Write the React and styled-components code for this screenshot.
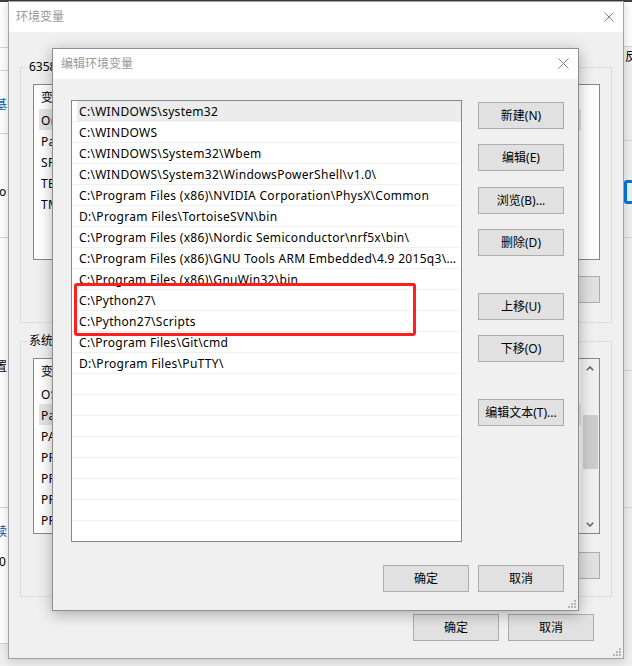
import React from 'react';
import styled, { createGlobalStyle } from 'styled-components';

const FONT = `"Noto Sans", "Noto Sans CJK SC", sans-serif`;

const GlobalStyle = createGlobalStyle`
  html, body { margin: 0; padding: 0; }
  body { background: #f0f0f0; font-family: ${FONT}; font-size: 12px; }
  * { box-sizing: border-box; }
`;

const Desktop = styled.div`
  position: relative;
  width: 632px;
  height: 666px;
  overflow: hidden;
  background: linear-gradient(#3c4043 0 2px, #f0f0f0 2px);
`;

/* ---------- partially visible windows behind ---------- */
const SideWindow = styled.div`
  position: absolute;
  left: ${p => p.$x}px;
  top: 2px;
  width: ${p => p.$w}px;
  height: 642px;
  background: ${p => p.$bg};
  display: flex;
  flex-direction: column;
`;
const SideSeg = styled.div`
  flex: none;
  height: ${p => p.$h}px;
  border-bottom: 1px solid #d6d6d6;
  padding-top: ${p => p.$pt || 0}px;
  padding-left: ${p => p.$pl || 0}px;
  background: ${p => p.$bg || 'transparent'};
`;
const SideText = styled.div`
  font: 12px/16px ${FONT};
  color: ${p => (p.$blue ? '#0063b1' : '#000')};
  margin-top: ${p => p.$mt || 0}px;
  margin-left: ${p => p.$ml || 0}px;
  white-space: nowrap;
`;
const BlueFrame = styled.div`
  width: 40px;
  height: 24px;
  border: 3px solid #0078d7;
  border-radius: 3px;
  margin-left: 4px;
`;

/* ---------- dialogs ---------- */
const Window = styled.div`
  position: absolute;
  left: ${p => p.$x}px;
  top: ${p => p.$y}px;
  width: ${p => p.$w}px;
  height: ${p => p.$h}px;
  border: 1px solid ${p => p.$border};
  background: #f0f0f0;
  display: flex;
  flex-direction: column;
  box-shadow: ${p => p.$shadow};
`;
const TitleBar = styled.div`
  flex: none;
  height: 30px;
  background: #fff;
  display: flex;
  align-items: center;
  justify-content: space-between;
  padding: 0 9px 1px ${p => p.$pl}px;
  font: 12px/16px ${FONT};
  color: #999;
`;
const Grip = styled.svg`
  position: absolute;
  right: 2px;
  bottom: 2px;
`;

const OuterBody = styled.div`
  flex: 1;
  display: flex;
  flex-direction: column;
  padding: 27px 11px 17px 11px;
`;
const Group = styled.fieldset`
  margin: ${p => p.$mt}px 0 0;
  padding: 9px 11px ${p => p.$pb}px 12px;
  border: 1px solid #dcdcdc;
  min-width: 0;
  display: flex;
  flex-direction: column;
`;
const Legend = styled.legend`
  padding: 0 2px;
  margin-left: -6px;
  font: 12px/16px ${FONT};
  color: #000;
`;
const ListBox = styled.div`
  flex: none;
  position: relative;
  height: ${p => p.$h}px;
  width: ${p => (p.$w ? `${p.$w}px` : 'auto')};
  border: 1px solid #828790;
  background: #fff;
  display: flex;
  overflow: hidden;
`;
const ListMain = styled.div`
  flex: 1;
  min-width: 0;
  display: flex;
  flex-direction: column;
`;
const ListHeader = styled.div`
  flex: none;
  height: 24px;
  padding-top: 2px;
  display: flex;
  align-items: center;
  font: 12px/16px ${FONT};
  color: #000;
`;
const HeaderCell = styled.div`
  flex: none;
  width: ${p => p.$w}px;
  padding-left: 7px;
`;
const VarRow = styled.div`
  flex: none;
  height: 21px;
  margin-left: 5px;
  padding: 2px 0 0 2px;
  display: flex;
  align-items: center;
  background: ${p => (p.$sel ? '#e5e5e5' : 'transparent')};
  font: 12px/16px ${FONT};
  letter-spacing: 0.3px;
  color: #000;
  white-space: nowrap;
`;
const VarCell = styled.div`
  flex: none;
  width: ${p => p.$w}px;
  overflow: hidden;
`;
const ScrollGap = styled.div`
  flex: none;
  width: 18px;
`;
const ScrollBar = styled.div`
  flex: none;
  width: 18px;
  background: #f0f0f0;
  display: flex;
  flex-direction: column;
`;
const ScrollArrow = styled.div`
  flex: none;
  height: 17px;
  padding-top: ${p => (p.$up ? 2 : 0)}px;
  display: flex;
  align-items: center;
  justify-content: center;
`;
const ScrollTrack = styled.div`
  flex: 1;
  padding: 0 1px 0 2px;
`;
const ScrollThumb = styled.div`
  margin-top: ${p => p.$top}px;
  height: ${p => p.$h}px;
  background: #cdcdcd;
`;

const ButtonRow = styled.div`
  display: flex;
  justify-content: flex-end;
  gap: 9px;
  margin-top: ${p => p.$mt || 0}px;
  padding-right: ${p => p.$pr || 0}px;
`;
const Button = styled.button`
  flex: none;
  width: 86px;
  height: 27px;
  margin: ${p => p.$mt || 0}px 0 0;
  padding: 0;
  border: 1px solid #adadad;
  background: #e1e1e1;
  font: 12px/16px ${FONT};
  color: #000;
`;

const EditBody = styled.div`
  flex: 1;
  display: flex;
  flex-direction: column;
  padding: 21px 14px 18px 18px;
`;
const EditMain = styled.div`
  display: flex;
  gap: 16px;
`;
const ButtonCol = styled.div`
  flex: none;
  width: 86px;
  display: flex;
  flex-direction: column;
`;
const PathRow = styled.div`
  flex: none;
  height: 21px;
  border-bottom: 1px solid #f0f0f0;
  display: flex;
`;
const PathCell = styled.div`
  flex: 1;
  min-width: 0;
  margin-left: 5px;
  padding: 2px 2px 0;
  background: ${p => (p.$sel ? '#ececec' : 'transparent')};
  font: 12px/18px ${FONT};
  letter-spacing: 0.3px;
  color: #000;
  white-space: nowrap;
  overflow: hidden;
  text-overflow: ellipsis;
`;
const RedBox = styled.div`
  position: absolute;
  left: 2px;
  top: 182px;
  width: 342px;
  height: 53px;
  border: 3px solid #ff1f1f;
  border-radius: 3px;
`;

/* ---------- icons ---------- */
const CloseIcon = ({ size }) => (
  <svg width={size} height={size} viewBox={`0 0 ${size} ${size}`}>
    <path
      d={`M0.5 0.5L${size - 0.5} ${size - 0.5}M${size - 0.5} 0.5L0.5 ${size - 0.5}`}
      stroke="#808080"
      strokeWidth="1"
      fill="none"
    />
  </svg>
);

const ResizeGrip = () => (
  <Grip width="8" height="8" viewBox="0 0 8 8">
    {[[6, 0], [3, 3], [6, 3], [0, 6], [3, 6], [6, 6]].map(([x, y]) => (
      <rect key={`${x}-${y}`} x={x} y={y} width="2" height="2" fill="#b4b4b4" />
    ))}
  </Grip>
);

const Chevron = ({ up }) => (
  <svg width="8" height="5" viewBox="0 0 8 5">
    <path
      d={up ? 'M0.8 4.2L4 1L7.2 4.2' : 'M0.8 0.8L4 4L7.2 0.8'}
      stroke="#606060"
      strokeWidth="1.5"
      fill="none"
    />
  </svg>
);

/* ---------- data ---------- */
const userVars = ['OneDrive', 'Path', 'SF_HOME', 'TEMP', 'TMP'];
const sysVars = [
  'OS',
  'Path',
  'PATHEXT',
  'PROCESSOR_ARCHITECTURE',
  'PROCESSOR_IDENTIFIER',
  'PROCESSOR_LEVEL',
  'PROCESSOR_REVISION',
];
const paths = [
  'C:\\WINDOWS\\system32',
  'C:\\WINDOWS',
  'C:\\WINDOWS\\System32\\Wbem',
  'C:\\WINDOWS\\System32\\WindowsPowerShell\\v1.0\\',
  'C:\\Program Files (x86)\\NVIDIA Corporation\\PhysX\\Common',
  'D:\\Program Files\\TortoiseSVN\\bin',
  'C:\\Program Files (x86)\\Nordic Semiconductor\\nrf5x\\bin\\',
  'C:\\Program Files (x86)\\GNU Tools ARM Embedded\\4.9 2015q3\\bin',
  'C:\\Program Files (x86)\\GnuWin32\\bin',
  'C:\\Python27\\',
  'C:\\Python27\\Scripts',
  'C:\\Program Files\\Git\\cmd',
  'D:\\Program Files\\PuTTY\\',
];
const pathRows = [...paths, ...Array(8).fill('')];

const VarList = ({ names, selected, scroll }) => (
  <ListBox $h={176}>
    <ListMain>
      <ListHeader>
        <HeaderCell $w={160}>变量</HeaderCell>
        <HeaderCell $w={300}>值</HeaderCell>
      </ListHeader>
      {names.map((n, i) => (
        <VarRow key={n} $sel={i === selected}>
          <VarCell $w={153}>{n}</VarCell>
        </VarRow>
      ))}
    </ListMain>
    {scroll ? (
      <ScrollBar>
        <ScrollArrow $up><Chevron up /></ScrollArrow>
        <ScrollTrack><ScrollThumb $top={39} $h={54} /></ScrollTrack>
        <ScrollArrow><Chevron /></ScrollArrow>
      </ScrollBar>
    ) : (
      <ScrollGap />
    )}
  </ListBox>
);

export default function App() {
  return (
    <>
      <GlobalStyle />
      <Desktop>
        {/* window behind, left */}
        <SideWindow $x={-100} $w={300} $bg="#fff">
          <SideSeg $h={46} />
          <SideSeg $h={23} />
          <SideSeg $h={63} $pt={26} $pl={95}><SideText $blue>基本</SideText></SideSeg>
          <SideSeg $h={104} $pt={50} $pl={95}><SideText $ml={4}>o</SideText></SideSeg>
          <SideSeg $h={270} $pt={121} $pl={95}><SideText>置</SideText></SideSeg>
          <SideSeg $h={136} $pt={16} $pl={95}>
            <SideText $blue>续</SideText>
            <SideText $mt={14} $ml={4}>0</SideText>
          </SideSeg>
        </SideWindow>

        {/* window behind, right */}
        <SideWindow $x={620} $w={100} $bg="#f0f0f0">
          <SideSeg $h={45} $bg="#fff" />
          <SideSeg $h={94} $pt={2} $pl={5}><SideText>反馈</SideText></SideSeg>
          <SideSeg $h={97} $pt={39}><BlueFrame /></SideSeg>
          <SideSeg $h={133} />
          <SideSeg $h={137} />
        </SideWindow>

        {/* 环境变量 */}
        <Window
          $x={8}
          $y={1}
          $w={616}
          $h={658}
          $border="#a3a3a3"
          $shadow="0 2px 10px rgba(0,0,0,0.18)"
        >
          <TitleBar $pl={7}>
            <span>环境变量</span>
            <CloseIcon size={10} />
          </TitleBar>
          <OuterBody>
            <Group $mt={0} $pb={19}>
              <Legend>63585 的用户变量(U)</Legend>
              <VarList names={userVars} selected={0} />
              <ButtonRow $mt={16}>
                <Button>新建(N)...</Button>
                <Button>编辑(E)...</Button>
                <Button>删除(D)</Button>
              </ButtonRow>
            </Group>
            <Group $mt={10} $pb={17}>
              <Legend>系统变量(S)</Legend>
              <VarList names={sysVars} selected={1} scroll />
              <ButtonRow $mt={18}>
                <Button>新建(W)...</Button>
                <Button>编辑(I)...</Button>
                <Button>删除(L)</Button>
              </ButtonRow>
            </Group>
            <ButtonRow $mt={17} $pr={18}>
              <Button>确定</Button>
              <Button>取消</Button>
            </ButtonRow>
          </OuterBody>
          <ResizeGrip />
        </Window>

        {/* 编辑环境变量 */}
        <Window
          $x={52}
          $y={48}
          $w={527}
          $h={563}
          $border="#8e8e8e"
          $shadow="0 3px 14px rgba(0,0,0,0.3)"
        >
          <TitleBar $pl={8}>
            <span>编辑环境变量</span>
            <CloseIcon size={11} />
          </TitleBar>
          <EditBody>
            <EditMain>
              <ListBox $h={442} $w={391}>
                <ListMain>
                  {pathRows.map((p, i) => (
                    <PathRow key={i}>
                      <PathCell $sel={i === 0}>{p}</PathCell>
                    </PathRow>
                  ))}
                </ListMain>
                <RedBox />
              </ListBox>
              <ButtonCol>
                <Button $mt={2}>新建(N)</Button>
                <Button $mt={15}>编辑(E)</Button>
                <Button $mt={16}>浏览(B)...</Button>
                <Button $mt={15}>删除(D)</Button>
                <Button $mt={37}>上移(U)</Button>
                <Button $mt={15}>下移(O)</Button>
                <Button $mt={37}>编辑文本(T)...</Button>
              </ButtonCol>
            </EditMain>
            <ButtonRow $mt={23}>
              <Button>确定</Button>
              <Button>取消</Button>
            </ButtonRow>
          </EditBody>
          <ResizeGrip />
        </Window>
      </Desktop>
    </>
  );
}
